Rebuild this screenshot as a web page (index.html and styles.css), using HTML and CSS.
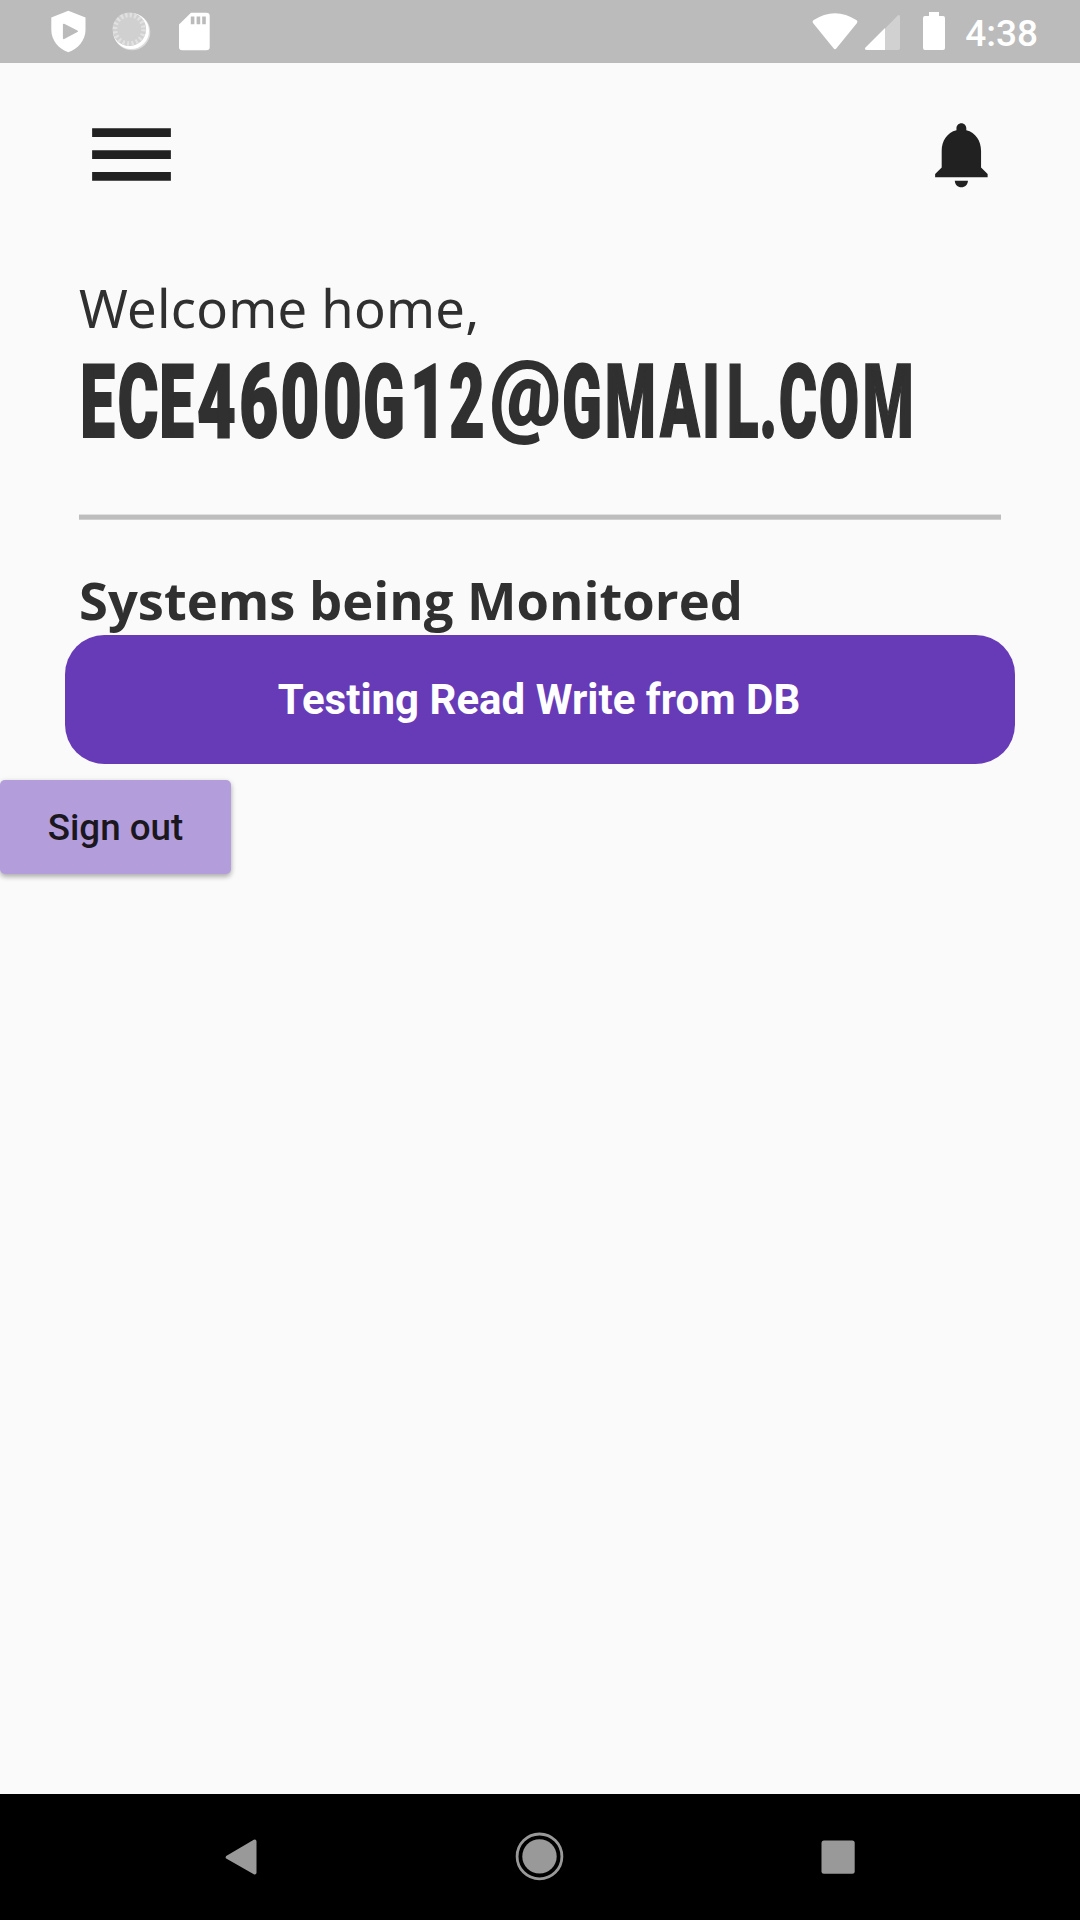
FILE: index.html
```html
<!DOCTYPE html>
<html lang="en">
<head>
<meta charset="utf-8">
<title>Home</title>
<link rel="stylesheet" href="styles.css">
</head>
<body>
<div class="screen">
  <header class="status">
    <svg class="status-left" width="180" height="63" viewBox="40 0 180 63">
      <path d="M68.3 10.7L85.5 17.5V30C85.5 40 78 49 68.3 52.3C58.5 49 51.3 40 51.3 30V17.5Z" fill="#fff"/>
      <path d="M63.8 24.6L77 31.3L63.8 38.2Z" fill="#bbb" stroke="#bbb" stroke-width="1.8" stroke-linejoin="round"/>
      <circle cx="132" cy="32" r="18.3" fill="#dcdcdc"/>
      <circle cx="131" cy="31" r="18" fill="#fff"/>
      <circle cx="129.3" cy="29.3" r="16.8" fill="#d0d0d0"/>
      <circle cx="129.3" cy="29.3" r="14.3" fill="none" stroke="#e1e1e1" stroke-width="4.5" stroke-dasharray="2.2 2.292"/>
      <path d="M191 12.7H206.3Q209.7 12.7 209.7 16V47Q209.7 50.3 206.3 50.3H182.3Q179 50.3 179 47V24.5Z" fill="#fff"/>
      <path d="M190.8 16.5h3.6v7.8h-3.6zM196.6 16.5h3.6v7.8h-3.6zM202.2 16.5h3.6v7.8h-3.6z" fill="#bbb"/>
    </svg>
    <div class="status-right">
      <svg width="140" height="63" viewBox="808 0 140 63">
        <path d="M813.3 20.3Q835 6 856.7 20.3Q858 21.3 857 23L836.5 48.3Q835 50 833.5 48.3L813 23Q812 21.3 813.3 20.3Z" fill="#fff"/>
        <path d="M885 28.5L897.5 15.7Q900 14 900 17V48Q900 50 898 50H885Z" fill="#d1d1d1"/>
        <path d="M885 28V50H867Q863.8 49.5 865.5 47.5Z" fill="#fff"/>
        <path d="M929 12h10v4h4q2 0 2 2v30q0 2-2 2h-18q-2 0-2-2v-30q0-2 2-2h4z" fill="#fff"/>
      </svg>
      <span class="clock">4:38</span>
    </div>
  </header>

  <main class="content">
    <nav class="toolbar">
      <svg class="menu" viewBox="0 0 24 24"><path d="M3 18h18v-2H3v2zm0-5h18v-2H3v2zm0-7v2h18V6H3z"/></svg>
      <svg class="bell" viewBox="0 0 24 24"><path d="M12 22c1.1 0 2-.9 2-2h-4c0 1.1.89 2 2 2zm6-6v-5c0-3.07-1.64-5.64-4.5-6.32V4c0-.83-.67-1.5-1.5-1.5s-1.5.67-1.5 1.5v.68C7.63 5.36 6 7.92 6 11v5l-2 2v1h16v-1l-2-2z"/></svg>
    </nav>

    <section class="intro">
      <p class="welcome">Welcome home,</p>
      <svg class="account" width="922" height="110" viewBox="79 346 922 110">
        <text transform="translate(0 437) scale(.61 1)" x="159.8 226.2 289.3">ECE</text>
        <text transform="translate(0 437) scale(.66 1)" x="328 392 454.5 519">4600</text>
        <text transform="translate(0 437) scale(.6 1)" x="640 713 778">G12</text>
        <text class="at" transform="translate(0 424) scale(.88 1)" x="597">@</text>
        <text transform="translate(0 437) scale(.57 1)" x="1021 1106.1 1193 1247.4 1303 1348 1400 1472 1558">GMAIL.COM</text>
      </svg>
      <div class="divider"></div>
      <h2 class="heading">Systems being Monitored</h2>
    </section>

    <div class="card">Testing Read Write from DB</div>
    <button class="signout">Sign out</button>
  </main>

  <footer class="navbar">
    <svg width="60" height="60" viewBox="210 1827 60 60"><path d="M227.5 1857.3L254.7 1841.3V1872.8Z" stroke-width="3.6" stroke-linejoin="round"/></svg>
    <svg width="60" height="60" viewBox="509 1827 60 60"><circle cx="539.5" cy="1856.4" r="17.2" stroke="none"/><circle cx="539.5" cy="1856.4" r="22.4" fill="none" stroke-width="2.8"/></svg>
    <svg width="60" height="60" viewBox="808 1827 60 60"><rect x="821.5" y="1840.5" width="33.2" height="33.2" rx="2.5" stroke="none"/></svg>
  </footer>
</div>
</body>
</html>
```
FILE: styles.css
```css
* { box-sizing: border-box; }
body { margin: 0; background: #fafafa; }
svg { display: block; flex: none; }
.screen {
  width: 1080px;
  height: 1920px;
  display: flex;
  flex-direction: column;
  overflow: hidden;
  background: #fafafa;
  font-family: Roboto, "Liberation Sans", sans-serif;
}
.status {
  height: 63px;
  background: #bbb;
  display: flex;
  justify-content: space-between;
  padding: 0 42px 0 40px;
}
.status-right { display: flex; align-items: center; gap: 17px; }
.clock {
  color: #fff;
  font-size: 37px;
  font-weight: 500;
  line-height: 63px;
  height: 59px;
}
.content { flex: 1; }
.toolbar {
  display: flex;
  justify-content: space-between;
  align-items: center;
  padding: 38.9px 79px 0;
}
.menu { width: 105px; height: 105px; fill: #212121; }
.bell { width: 78.75px; height: 78.75px; fill: #212121; }
.intro { padding: 65px 79px 0; color: #303030; }
.welcome, .heading {
  margin: 0;
  font-size: 52.5px;
  line-height: 72px;
}
.welcome { font-family: "Noto Sans", "Open Sans", sans-serif; font-weight: 400; letter-spacing: .25px; }
.heading { font-family: "Open Sans", "Noto Sans", sans-serif; font-weight: 700; padding-top: 44px; }
.account { margin-top: 2px; overflow: visible; }
.account text {
  font-family: Roboto, sans-serif;
  font-size: 101.5px;
  font-weight: 900;
  text-anchor: middle;
  fill: #303030;
  stroke: #303030;
  stroke-width: 2px;
}
.account .at { font-size: 90px; font-weight: 700; }
.divider {
  height: 6px;
  margin-top: 58px;
  background: #bdbdbd;
  border-top: 1px solid #e0e0e0;
  border-bottom: 1px solid #cfcfcf;
}
.card {
  margin: -1px 65.3px 0;
  padding-right: 2px;
  height: 129.3px;
  border-radius: 39.4px;
  background: #673ab7;
  color: #fff;
  font-size: 42px;
  font-weight: 700;
  line-height: 129px;
  text-align: center;
}
.signout {
  display: block;
  margin: 16px 0 0;
  width: 231px;
  height: 94px;
  padding: 0;
  border: 0;
  border-radius: 5px;
  background: #b39ddb;
  box-shadow: 0 3px 5px rgba(0, 0, 0, .25), 0 1px 6px rgba(0, 0, 0, .1);
  color: #1b171f;
  font: 500 36.75px Roboto, sans-serif;
}
.navbar {
  height: 126px;
  background: #000;
  display: flex;
  align-items: center;
  justify-content: space-between;
  padding: 0 212px 0 210px;
  fill: #999;
  stroke: #999;
}
```
